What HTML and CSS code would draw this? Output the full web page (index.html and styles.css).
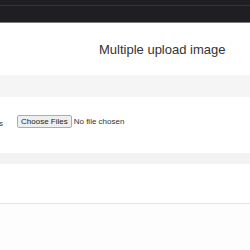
FILE: index.html
```html
<!DOCTYPE html>
<html lang="en">
<head>
    <meta charset="UTF-8">
    <link rel="stylesheet" href="styles.css">
</head>
<body>
    <div class="navbar">
        <div class="navbar-line"></div>
    </div>
    <div class="page-header">
        <h1>Multiple upload image</h1>
    </div>
    <div class="panel">
        <div class="panel-heading"></div>
        <div class="panel-body">
            <form method="post" enctype="multipart/form-data">
                <div class="form-group">
                    <label for="images">Images</label>
                    <input type="file" name="images[]" id="images" multiple>
                </div>
            </form>
        </div>
        <div class="panel-footer"></div>
    </div>
    <div class="gallery"></div>
    <div class="footer"></div>
</body>
</html>
```

FILE: styles.css
```css
body {
    margin: 0;
    font-family: 'Liberation Sans', Arial, sans-serif;
    color: #333;
    background-color: #fff;
    overflow: hidden;
}

.navbar {
    height: 23px;
    background-color: #1f1f23;
    border-bottom: 1px solid #7a7a7a;
    padding-top: 5px;
    box-sizing: border-box;
}

.navbar-line {
    height: 1px;
    background-color: #34343a;
}

.page-header {
    height: 52px;
    display: flex;
    align-items: center;
    padding-left: 99px;
    padding-top: 1px;
    box-sizing: border-box;
}

.page-header h1 {
    margin: 0;
    font-size: 13px;
    font-weight: normal;
    color: #333;
}

.panel-heading {
    height: 22px;
    background-color: #f5f5f5;
}

.panel-body {
    height: 56px;
    padding-top: 18px;
    box-sizing: border-box;
}

.form-group {
    display: flex;
    align-items: center;
    margin-left: -27px;
}

.form-group label {
    width: 30px;
    font-size: 8px;
    text-align: right;
    margin-right: 14px;
    margin-top: 4px;
}

.form-group input[type="file"] {
    font-family: 'Liberation Sans', Arial, sans-serif;
    font-size: 8px;
    color: #333;
}

.form-group input[type="file"]::file-selector-button {
    font-family: 'Liberation Sans', Arial, sans-serif;
    font-size: 8px;
    padding: 1px 3px;
    margin-right: 2px;
    border: 1px solid #adadad;
    border-radius: 2px;
    background-color: #efefef;
    color: #222;
}

.panel-footer {
    height: 11px;
    background-color: #f3f3f3;
}

.gallery {
    height: 39px;
    border-bottom: 1px solid #e4e4e4;
}

.footer {
    height: 46px;
    background-color: #fdfdfd;
}
```
